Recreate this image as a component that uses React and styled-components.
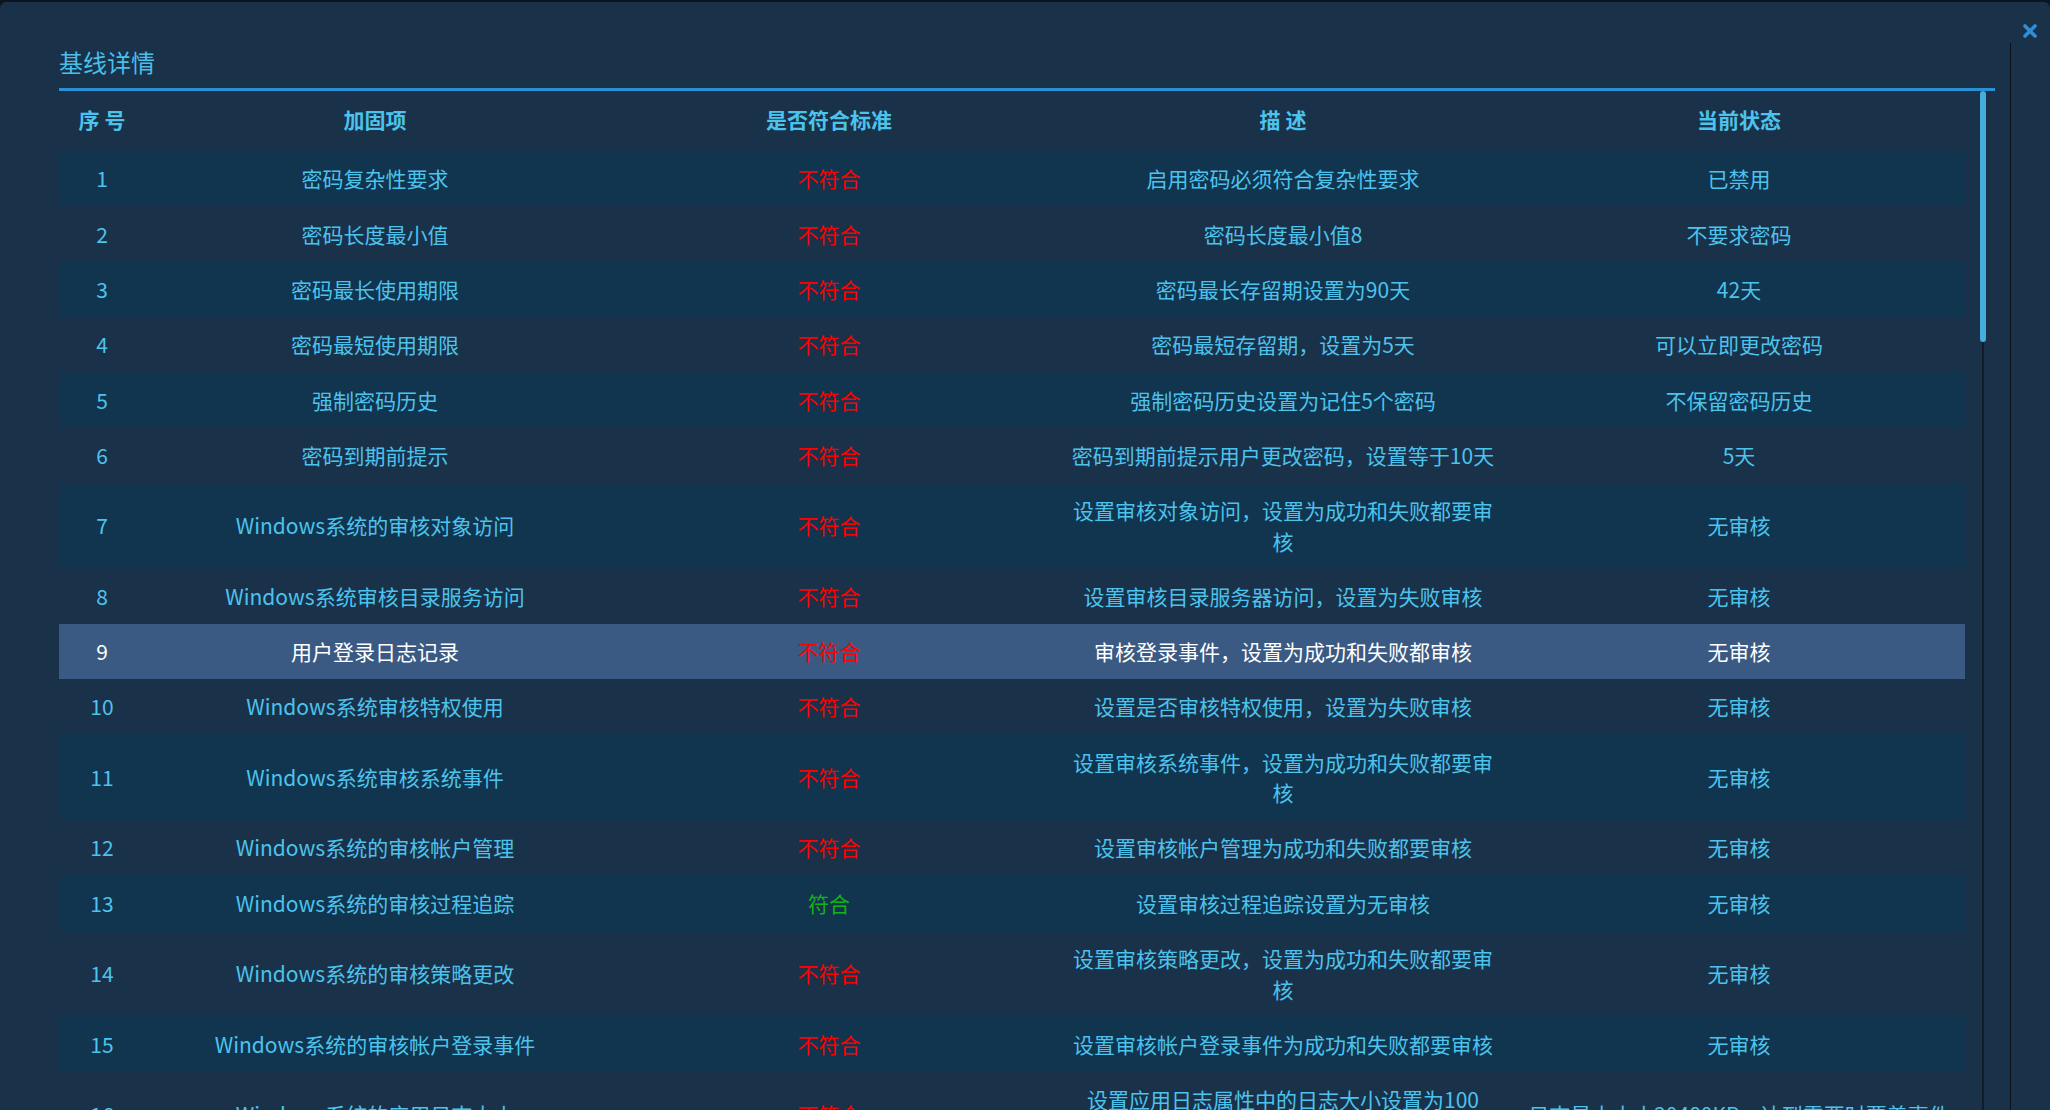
import React from "react";
import styled, { createGlobalStyle } from "styled-components";

const rows = [
  ["1", "密码复杂性要求", false, "启用密码必须符合复杂性要求", "已禁用"],
  ["2", "密码长度最小值", false, "密码长度最小值8", "不要求密码"],
  ["3", "密码最长使用期限", false, "密码最长存留期设置为90天", "42天"],
  ["4", "密码最短使用期限", false, "密码最短存留期，设置为5天", "可以立即更改密码"],
  ["5", "强制密码历史", false, "强制密码历史设置为记住5个密码", "不保留密码历史"],
  ["6", "密码到期前提示", false, "密码到期前提示用户更改密码，设置等于10天", "5天"],
  ["7", "Windows系统的审核对象访问", false, "设置审核对象访问，设置为成功和失败都要审核", "无审核"],
  ["8", "Windows系统审核目录服务访问", false, "设置审核目录服务器访问，设置为失败审核", "无审核"],
  ["9", "用户登录日志记录", false, "审核登录事件，设置为成功和失败都审核", "无审核"],
  ["10", "Windows系统审核特权使用", false, "设置是否审核特权使用，设置为失败审核", "无审核"],
  ["11", "Windows系统审核系统事件", false, "设置审核系统事件，设置为成功和失败都要审核", "无审核"],
  ["12", "Windows系统的审核帐户管理", false, "设置审核帐户管理为成功和失败都要审核", "无审核"],
  ["13", "Windows系统的审核过程追踪", true, "设置审核过程追踪设置为无审核", "无审核"],
  ["14", "Windows系统的审核策略更改", false, "设置审核策略更改，设置为成功和失败都要审核", "无审核"],
  ["15", "Windows系统的审核帐户登录事件", false, "设置审核帐户登录事件为成功和失败都要审核", "无审核"],
  ["16", "Windows系统的应用日志大小", false, "设置应用日志属性中的日志大小设置为100 MB，达到最大值时按需要覆盖事件", "日志最大大小20480KB，达到需要时覆盖事件"],
];

const SELECTED = "9";

function App() {
  return (
    <>
      <GlobalStyle />
      <Screen>
        <Modal>
          <Main>
            <Title>基线详情</Title>
            <Body>
              <TableWrap>
                <Table>
                  <colgroup>
                    <col style={{ width: 86 }} />
                    <col style={{ width: 460 }} />
                    <col style={{ width: 448 }} />
                    <col style={{ width: 460 }} />
                    <col style={{ width: 452 }} />
                  </colgroup>
                  <thead>
                    <tr>
                      <Th>序 号</Th>
                      <Th>加固项</Th>
                      <Th>是否符合标准</Th>
                      <Th>描 述</Th>
                      <Th>当前状态</Th>
                    </tr>
                  </thead>
                  <tbody>
                    {rows.map(([no, item, ok, desc, state], i) => (
                      <Row key={no} $striped={i % 2 === 0} $active={no === SELECTED}>
                        <Td>{no}</Td>
                        <Td>{item}</Td>
                        <Td>
                          <Verdict $ok={ok}>{ok ? "符合" : "不符合"}</Verdict>
                        </Td>
                        <Td>{desc}</Td>
                        <Td>{state}</Td>
                      </Row>
                    ))}
                  </tbody>
                </Table>
              </TableWrap>
              <ScrollTrack>
                <Thumb />
              </ScrollTrack>
            </Body>
          </Main>
          <Rail>
            <CloseButton aria-label="关闭">
              <svg width="16" height="16" viewBox="0 0 16 16">
                <path d="M3 3 L13 13 M13 3 L3 13" stroke="#2e8fd7" strokeWidth="3.6" strokeLinecap="round" />
              </svg>
            </CloseButton>
            <RailTrack />
          </Rail>
        </Modal>
      </Screen>
    </>
  );
}

export default App;

const GlobalStyle = createGlobalStyle`
  html, body {
    margin: 0;
    padding: 0;
    background: #0c141d;
    overflow: hidden;
  }
  * { box-sizing: border-box; }
`;

const Screen = styled.div`
  height: 100vh;
  padding-top: 2px;
  font-family: "Noto Sans CJK SC", "Noto Sans", sans-serif;
`;

const Modal = styled.div`
  height: 100%;
  display: flex;
  background: #1a314a;
  border-top-left-radius: 6px;
  border-top-right-radius: 6px;
  overflow: hidden;
`;

const Main = styled.div`
  flex: 1;
  min-width: 0;
  display: flex;
  flex-direction: column;
  padding: 43px 15px 0 59px;
`;

const Title = styled.div`
  font-size: 24px;
  line-height: 34px;
  color: #47bfe8;
  padding-bottom: 9px;
  border-bottom: 3px solid #2b8fd5;
`;

const Body = styled.div`
  flex: 1;
  min-height: 0;
  display: flex;
`;

const TableWrap = styled.div`
  flex: 1;
  overflow: hidden;
`;

const Table = styled.table`
  width: 1906px;
  table-layout: fixed;
  border-collapse: collapse;
  color: #4cc3ec;
  font-size: 21px;
`;

const Th = styled.th`
  height: 60px;
  padding: 0 12px 5px;
  font-weight: bold;
  text-align: center;
  line-height: 30px;
  white-space: pre;
`;

const Row = styled.tr`
  background: ${(p) => (p.$active ? "#3a5a84" : p.$striped ? "#11344f" : "transparent")};
  color: ${(p) => (p.$active ? "#ffffff" : "inherit")};
`;

const Td = styled.td`
  padding: 12.4px 12px;
  text-align: center;
  vertical-align: middle;
  line-height: 30.5px;
`;

const Verdict = styled.span`
  color: ${(p) => (p.$ok ? "#13b313" : "#ff0000")};
`;

const ScrollTrack = styled.div`
  width: 30px;
  display: flex;
  justify-content: flex-start;
  padding-left: 15px;
  background: linear-gradient(to right, transparent 17px, #101c2a 17px, #101c2a 19px, transparent 19px);
`;

const Thumb = styled.div`
  width: 6px;
  height: 251px;
  border-radius: 3px;
  background: #45aedc;
`;

const Rail = styled.div`
  width: 40px;
  display: flex;
  flex-direction: column;
`;

const CloseButton = styled.button`
  height: 41px;
  border: 0;
  padding: 21px 0 0;
  background: transparent;
  display: flex;
  justify-content: center;
  align-items: flex-start;
  cursor: pointer;
`;

const RailTrack = styled.div`
  flex: 1;
  border-left: 1px solid #08101a;
`;
